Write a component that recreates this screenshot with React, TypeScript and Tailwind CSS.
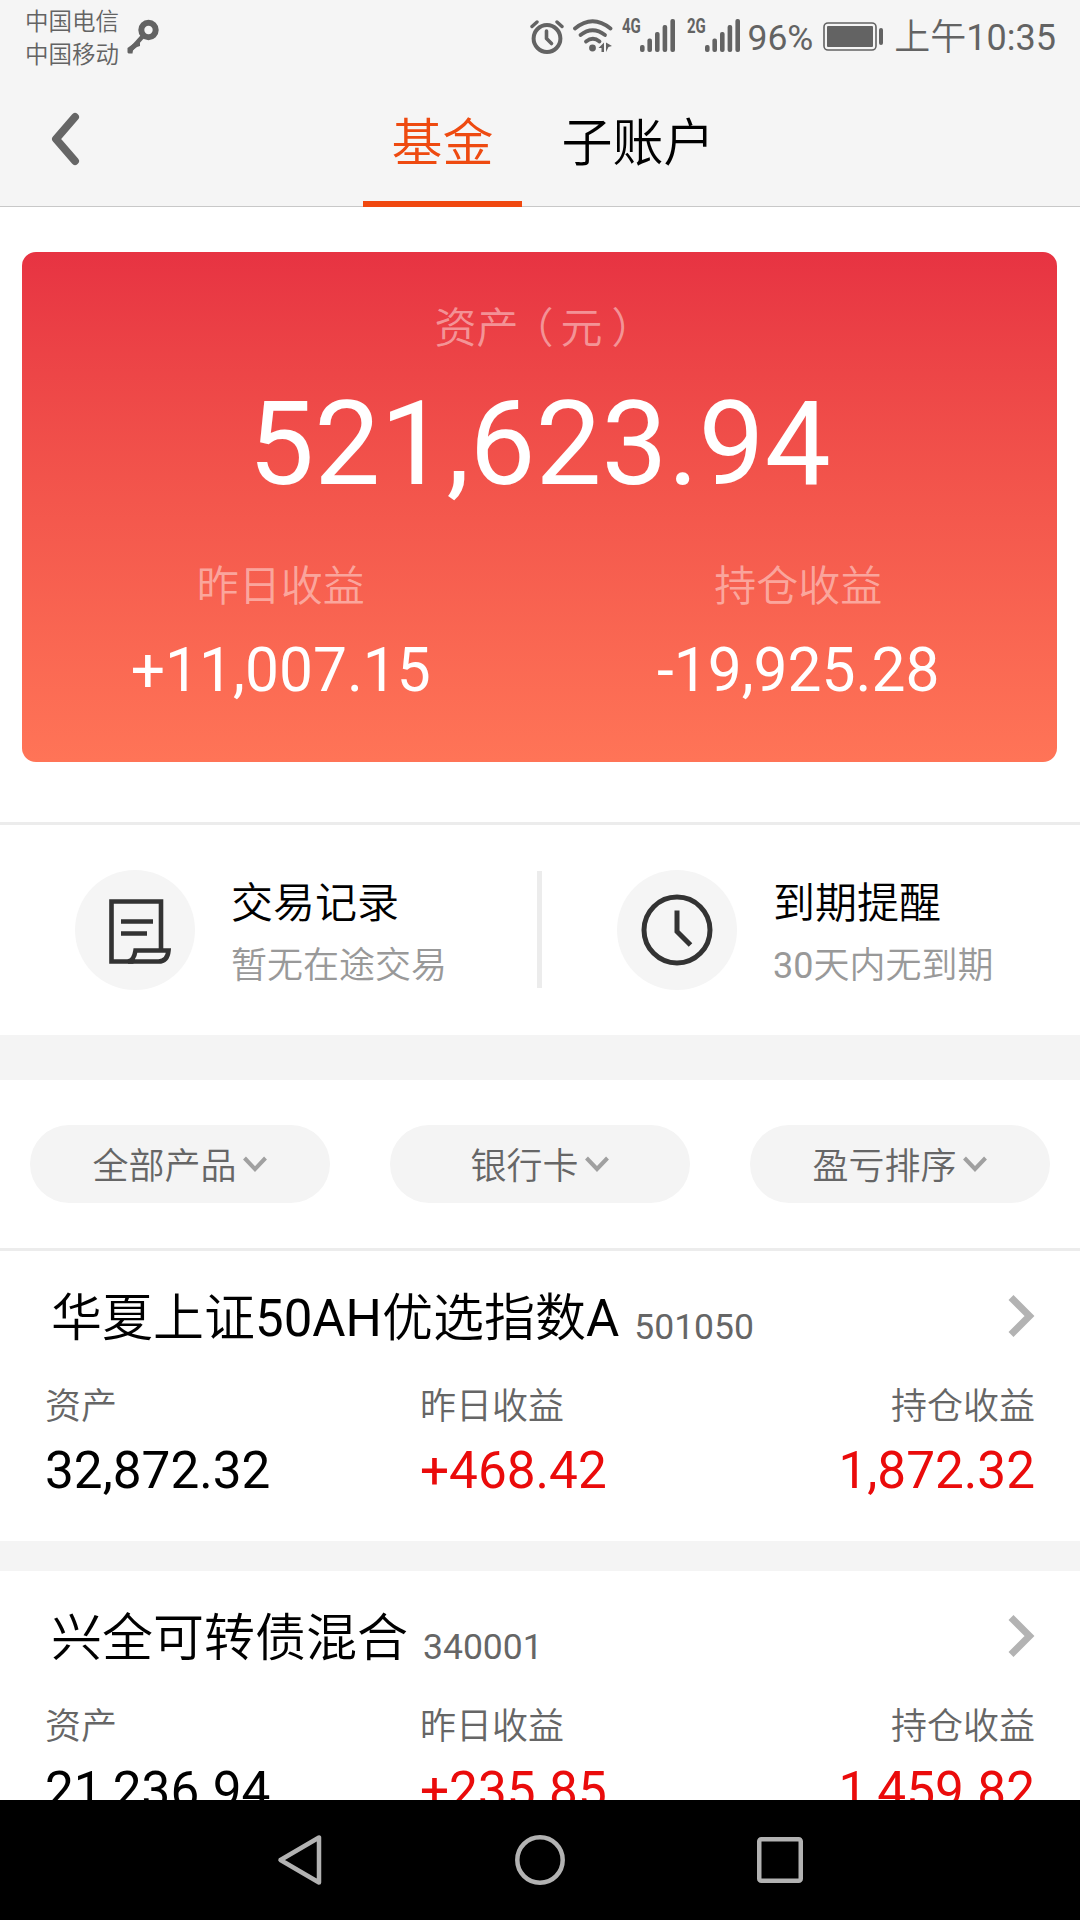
import { clsx } from "clsx";
import type { ReactNode } from "react";

type Fund = {
  name: string;
  code: string;
  asset: string;
  yesterday: string;
  holding: string;
};

const FUNDS: Fund[] = [
  {
    name: "华夏上证50AH优选指数A",
    code: "501050",
    asset: "32,872.32",
    yesterday: "+468.42",
    holding: "1,872.32",
  },
  {
    name: "兴全可转债混合",
    code: "340001",
    asset: "21,236.94",
    yesterday: "+235.85",
    holding: "1,459.82",
  },
];

const FILTERS = ["全部产品", "银行卡", "盈亏排序"];

export default function App() {
  return (
    <div className="flex h-[1920px] w-[1080px] flex-col overflow-hidden bg-white font-[Roboto,'Noto_Sans_CJK_SC_DemiLight','Noto_Sans_CJK_SC',sans-serif] text-black">
      <StatusBar />
      <Header />

      <main className="flex min-h-0 flex-1 flex-col overflow-hidden">
        <div className="shrink-0 border-b-[3px] border-[#ececec] pt-[45px] pr-[23px] pb-[60px] pl-[22px]">
          <SummaryCard />
        </div>
        <Shortcuts />
        <div className="h-[45px] shrink-0 bg-[#f4f4f4]" />
        <Filters />
        {FUNDS.map((fund) => (
          <FundRow key={fund.code} fund={fund} />
        ))}
      </main>

      <NavigationBar />
    </div>
  );
}

// STATUS BAR
function StatusBar() {
  return (
    <div className="flex h-[72px] shrink-0 justify-between bg-[#f5f5f5] pr-[24px] pl-[25px] text-[#636363]">
      <div className="flex">
        <div className="pt-[6px] text-[23.5px] leading-[32.5px]">
          <div>中国电信</div>
          <div>中国移动</div>
        </div>
        <svg className="mt-[19px] ml-[8px]" width="32" height="36" viewBox="0 0 32 36" fill="none">
          <circle cx="21.5" cy="11" r="7.2" stroke="currentColor" strokeWidth="6" />
          <path d="M16 17 3 31.5" stroke="currentColor" strokeWidth="4.4" />
          <path d="m6 25 7-4v6l-3 1-4 3-.5 3.5H1.5l-1-1V29z" fill="currentColor" />
        </svg>
      </div>

      <div className="flex">
        <svg className="mt-[19px]" width="34" height="35" viewBox="0 0 34 35" fill="none" stroke="currentColor">
          <circle cx="17" cy="19.5" r="13.4" strokeWidth="4" />
          <path d="M16.5 12v7.5l5 5" strokeWidth="3.6" strokeLinecap="round" strokeLinejoin="round" />
          <path d="M2 7.5 7 3M32 7.5 27 3" strokeWidth="3.4" strokeLinecap="round" />
        </svg>
        <svg className="mt-[19px] ml-[9px]" width="41" height="35" viewBox="0 0 41 35" fill="none">
          <g stroke="currentColor" strokeWidth="3.8" strokeLinecap="round">
            <path d="M2 9.5q17.5-14.500 35.500 0" />
            <path d="M7.5 16q12-9.500 24.500 0" />
            <path d="M13 22.5q7-5.500 13.500 0" />
          </g>
          <circle cx="19.5" cy="29" r="3.4" fill="currentColor" />
          <path d="M25.5 29 31 23.500V33h-2.500v-4zM33 33v-9.500L39 27l-3.500 1z" fill="currentColor" />
        </svg>
        <Signal label="4G" className="ml-[8px]" />
        <Signal label="2G" className="ml-[11px]" />
        <div className="ml-[6px] text-[35.5px] leading-[76px]">96%</div>
        <svg className="mt-[22px] ml-[10px]" width="61" height="29" viewBox="0 0 61 29" fill="none">
          <rect x="1" y="1" width="52" height="27" rx="4" stroke="currentColor" strokeWidth="1.6" />
          <rect x="4" y="4" width="46" height="21" rx="1" fill="currentColor" />
          <rect x="56" y="6" width="4" height="17" rx="2" fill="currentColor" />
        </svg>
        <div className="ml-[10px] text-[36px] leading-[76px] whitespace-nowrap">上午10:35</div>
      </div>
    </div>
  );
}

function Signal({ label, className }: { label: string; className?: string }) {
  return (
    <div className={clsx("flex", className)}>
      <span className="mt-[16px] w-[18px] origin-left scale-x-75 text-[20px] leading-[20px] font-bold">{label}</span>
      <svg className="mt-[19px]" width="36" height="34" viewBox="0 0 36 34" fill="currentColor">
        <rect x="0" y="26" width="4.6" height="7" rx="2" />
        <rect x="7.4" y="19.5" width="4.6" height="13.5" rx="2" />
        <rect x="15" y="13" width="4.6" height="20" rx="2" />
        <rect x="22.6" y="6" width="4.6" height="27" rx="2" />
        <rect x="30.4" y="0" width="4.6" height="33" rx="2" />
      </svg>
    </div>
  );
}

// HEADER
function Header() {
  return (
    <header className="flex h-[135px] shrink-0 border-b border-[#c8c8c8] bg-[#f5f5f5]">
      <button type="button" className="w-[363px] shrink-0 pl-[51px]">
        <svg width="30" height="54" viewBox="0 0 30 54" fill="none">
          <path
            d="M24 5 5 27l19 22"
            stroke="#666"
            strokeWidth="8"
            strokeLinecap="round"
            strokeLinejoin="round"
          />
        </svg>
      </button>
      <div className="flex gap-[11px]">
        <Tab active>基金</Tab>
        <Tab>子账户</Tab>
      </div>
    </header>
  );
}

function Tab({ active, children }: { active?: boolean; children: ReactNode }) {
  return (
    <div
      className={clsx(
        "-mb-px h-[135px] border-b-[6px] px-[28.5px] text-[51px] leading-[143px]",
        active ? "border-[#f0480f] text-[#ee4a10]" : "border-transparent",
      )}
    >
      {children}
    </div>
  );
}

// SUMMARY
function SummaryCard() {
  return (
    <section className="h-[510px] rounded-[14px] bg-linear-to-b from-[#e73342] to-[#ff7457] text-center text-white">
      <div className="text-[42px] leading-[153px] text-white/45">
        资产
        <span className="mr-[7px] ml-[14px] [font-feature-settings:'halt']">（</span>
        元
        <span className="mr-[12px] ml-[9px] [font-feature-settings:'halt']">）</span>
      </div>
      <div className="pt-[2px] text-[117.5px] leading-[74px]">521,623.94</div>
      <div className="mt-[76px] grid grid-cols-2">
        <SummaryItem label="昨日收益" value="+11,007.15" />
        <SummaryItem label="持仓收益" value="-19,925.28" />
      </div>
    </section>
  );
}

function SummaryItem({ label, value }: { label: string; value: string }) {
  return (
    <div>
      <div className="text-[42px] leading-[60px] text-white/45">{label}</div>
      <div className="mt-[24px] text-[60.5px] leading-[60px]">{value}</div>
    </div>
  );
}

// SHORTCUTS
function Shortcuts() {
  return (
    <section className="flex h-[210px] shrink-0 items-start pt-[45px]">
      <Shortcut className="w-[537px] pl-[75px]" title="交易记录" subtitle="暂无在途交易">
        <svg className="mt-[3px] ml-[7px]" width="66" height="70" viewBox="0 0 66 70" fill="none" stroke="#333" strokeWidth="4.6">
          <path d="M55 53V4.500H5.500v60h22" />
          <path d="M15 24.500h32M15 36.500h26" />
          <path d="M22 64.500q6-1 7.500-11h33q-1 11-10 11z" />
        </svg>
      </Shortcut>
      <div className="mt-px h-[117px] w-[5px] bg-[#ececec]" />
      <Shortcut className="pl-[75px]" title="到期提醒" subtitle="30天内无到期">
        <svg width="72" height="72" viewBox="0 0 72 72" fill="none" stroke="#333" strokeWidth="5">
          <circle cx="36" cy="36" r="33" />
          <path d="M36 16.500v21l13.500 13.500" />
        </svg>
      </Shortcut>
    </section>
  );
}

type ShortcutProps = {
  className?: string;
  title: string;
  subtitle: string;
  children: ReactNode;
};

function Shortcut({ className, title, subtitle, children }: ShortcutProps) {
  return (
    <div className={clsx("flex gap-[36px]", className)}>
      <div className="flex size-[120px] items-center justify-center rounded-full bg-[#f5f5f5]">{children}</div>
      <div className="pt-1 leading-[60px]">
        <div className="text-[42px]">{title}</div>
        <div className="mt-[2px] text-[36px] text-[#999]">{subtitle}</div>
      </div>
    </div>
  );
}

// FILTERS
function Filters() {
  return (
    <section className="flex h-[171px] shrink-0 gap-[60px] border-b-[3px] border-[#ececec] px-[30px] pt-[45px]">
      {FILTERS.map((label) => (
        <button
          key={label}
          type="button"
          className="flex h-[78px] w-[300px] items-center justify-center gap-[5px] rounded-full bg-[#f4f4f4] text-[#666]"
        >
          <span className="pt-[6px] text-[36px] leading-[60px]">{label}</span>
          <svg width="26" height="18" viewBox="0 0 26 18" fill="none">
            <path d="M2.5 3 13 14 23.500 3" stroke="#a0a0a0" strokeWidth="4" />
          </svg>
        </button>
      ))}
    </section>
  );
}

// FUND LIST
function FundRow({ fund }: { fund: Fund }) {
  return (
    <article className="h-[320px] shrink-0 border-b-[30px] border-[#f4f4f4] px-[45px]">
      <div className="flex h-[134px] items-center pl-[6px]">
        <h2 className="pt-[2px] text-[51px] leading-[60px]">{fund.name}</h2>
        <span className="ml-[15px] pt-[18px] text-[35.5px] leading-[40px] text-[#666]">{fund.code}</span>
        <svg className="mb-[5px] ml-auto" width="27" height="44" viewBox="0 0 27 44" fill="none">
          <path d="M3 3.500 21.500 22 3 40.500" stroke="#b3b3b3" strokeWidth="7" />
        </svg>
      </div>
      <div className="grid grid-cols-[375px_1fr_auto]">
        <Cell label="资产" value={fund.asset} />
        <Cell label="昨日收益" value={fund.yesterday} className="text-[#ea0b0b]" />
        <Cell label="持仓收益" value={fund.holding} className="text-right text-[#ea0b0b]" />
      </div>
    </article>
  );
}

function Cell({ label, value, className }: { label: string; value: string; className?: string }) {
  return (
    <div className={className}>
      <div className="text-[36px] leading-[44px] text-[#666]">{label}</div>
      <div className="text-[51.3px] leading-[84px]">{value}</div>
    </div>
  );
}

// ANDROID NAVIGATION
function NavigationBar() {
  return (
    <nav className="flex h-[120px] shrink-0 items-center justify-center gap-[190px] bg-black">
      <svg width="50" height="52" viewBox="0 0 50 52" fill="none">
        <path d="M44 3.500v45L5.500 26z" stroke="#b2b2b2" strokeWidth="4.5" strokeLinejoin="round" />
      </svg>
      <svg width="50" height="52" viewBox="0 0 50 52" fill="none">
        <circle cx="25" cy="26" r="22.7" stroke="#b2b2b2" strokeWidth="4.5" />
      </svg>
      <svg width="50" height="52" viewBox="0 0 50 52" fill="none">
        <rect x="4.25" y="5.25" width="41.5" height="41.5" rx="2" stroke="#b2b2b2" strokeWidth="4.5" />
      </svg>
    </nav>
  );
}
